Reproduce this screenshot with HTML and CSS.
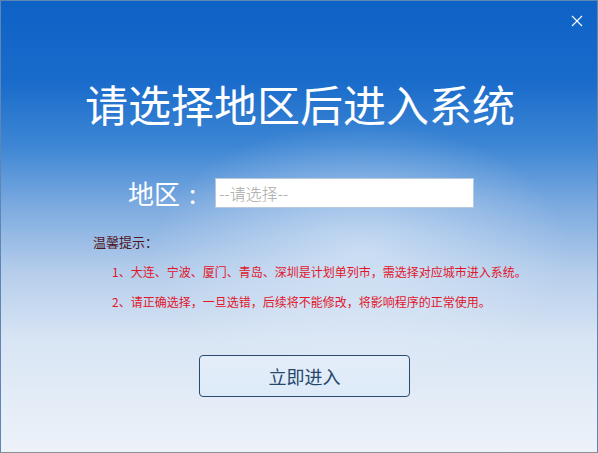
FILE: index.html
```html
<!DOCTYPE html>
<html lang="zh-CN">
<head>
<meta charset="utf-8">
<title>请选择地区后进入系统</title>
<link rel="stylesheet" href="styles.css">
</head>
<body>
<div class="window">
  <div class="glow"></div>
  <svg class="close" width="12" height="12" viewBox="0 0 12 12"><path d="M1 1L11 11M11 1L1 11" stroke="#ffffff" stroke-width="1.1" fill="none"/></svg>
  <h1 class="title">请选择地区后进入系统</h1>
  <div class="region">
    <span class="region-label">地区<span class="colon">:</span></span>
    <div class="select">--请选择--</div>
  </div>
  <div class="tips">
    <p class="tips-head">温馨提示：</p>
    <p class="tip">1、大连、宁波、厦门、青岛、深圳是计划单列市，需选择对应城市进入系统。</p>
    <p class="tip">2、请正确选择，一旦选错，后续将不能修改，将影响程序的正常使用。</p>
  </div>
  <button class="enter">立即进入</button>
</div>
</body>
</html>
```
FILE: styles.css
```css
html, body {
  margin: 0;
  padding: 0;
}
body {
  width: 598px;
  height: 453px;
  overflow: hidden;
  font-family: "Noto Sans CJK SC", "Noto Sans", sans-serif;
}
.window {
  position: relative;
  width: 598px;
  height: 453px;
  box-sizing: border-box;
  border: 1px solid #5e86b4;
  border-bottom-color: #8a8f96;
  overflow: hidden;
  background: linear-gradient(180deg, #0e62c6 0%, #1a6ccb 18%, #3d86d4 32%, #7aa9df 45%, #b5cdeb 60%, #d8e5f4 75%, #edf2f9 100%);
  display: flex;
  flex-direction: column;
  padding-top: 80px;
}
.glow {
  position: absolute;
  left: 150px;
  top: 120px;
  width: 420px;
  height: 260px;
  background: radial-gradient(ellipse at center, rgba(235, 243, 252, 0.55) 0%, rgba(235, 243, 252, 0.2) 45%, rgba(235, 243, 252, 0) 70%);
  pointer-events: none;
}
.close {
  position: absolute;
  right: 14px;
  top: 14px;
}
.title {
  position: relative;
  margin: 0 0 0 84px;
  font-size: 43px;
  line-height: 44px;
  height: 44px;
  font-weight: 400;
  color: #ffffff;
  letter-spacing: 0;
  white-space: nowrap;
}
.region {
  position: relative;
  display: flex;
  align-items: center;
  margin: 53px 0 0 127px;
  height: 30px;
}
.region-label {
  font-size: 26px;
  line-height: 30px;
  color: #ffffff;
  width: 87px;
  white-space: nowrap;
}
.colon {
  margin-left: 9px;
}
.select {
  width: 254px;
  height: 28px;
  background: #ffffff;
  border: 1px solid #b9c9dc;
  font-size: 16px;
  line-height: 28px;
  color: #a8a8a8;
  padding-left: 3px;
  font-weight: 300;
}
.tips {
  position: relative;
  margin: 26px 0 0 92px;
}
.tips p {
  margin: 0;
  font-size: 12px;
  line-height: 16px;
  white-space: nowrap;
}
.tips .tips-head {
  color: #4e1424;
  font-size: 13px;
}
.tip {
  color: #e0162c;
  margin-left: 19px !important;
  margin-top: 14px !important;
}
.enter {
  position: relative;
  margin: 45px 0 0 198px;
  width: 211px;
  height: 42px;
  border: 1px solid #284a6c;
  border-radius: 4px;
  background: linear-gradient(180deg, #e4eef9 0%, #ddeaf8 100%);
  color: #27476a;
  font-family: "Noto Sans CJK SC", "Noto Sans", sans-serif;
  font-size: 18px;
  padding: 0;
  cursor: pointer;
  align-self: flex-start;
}
```
